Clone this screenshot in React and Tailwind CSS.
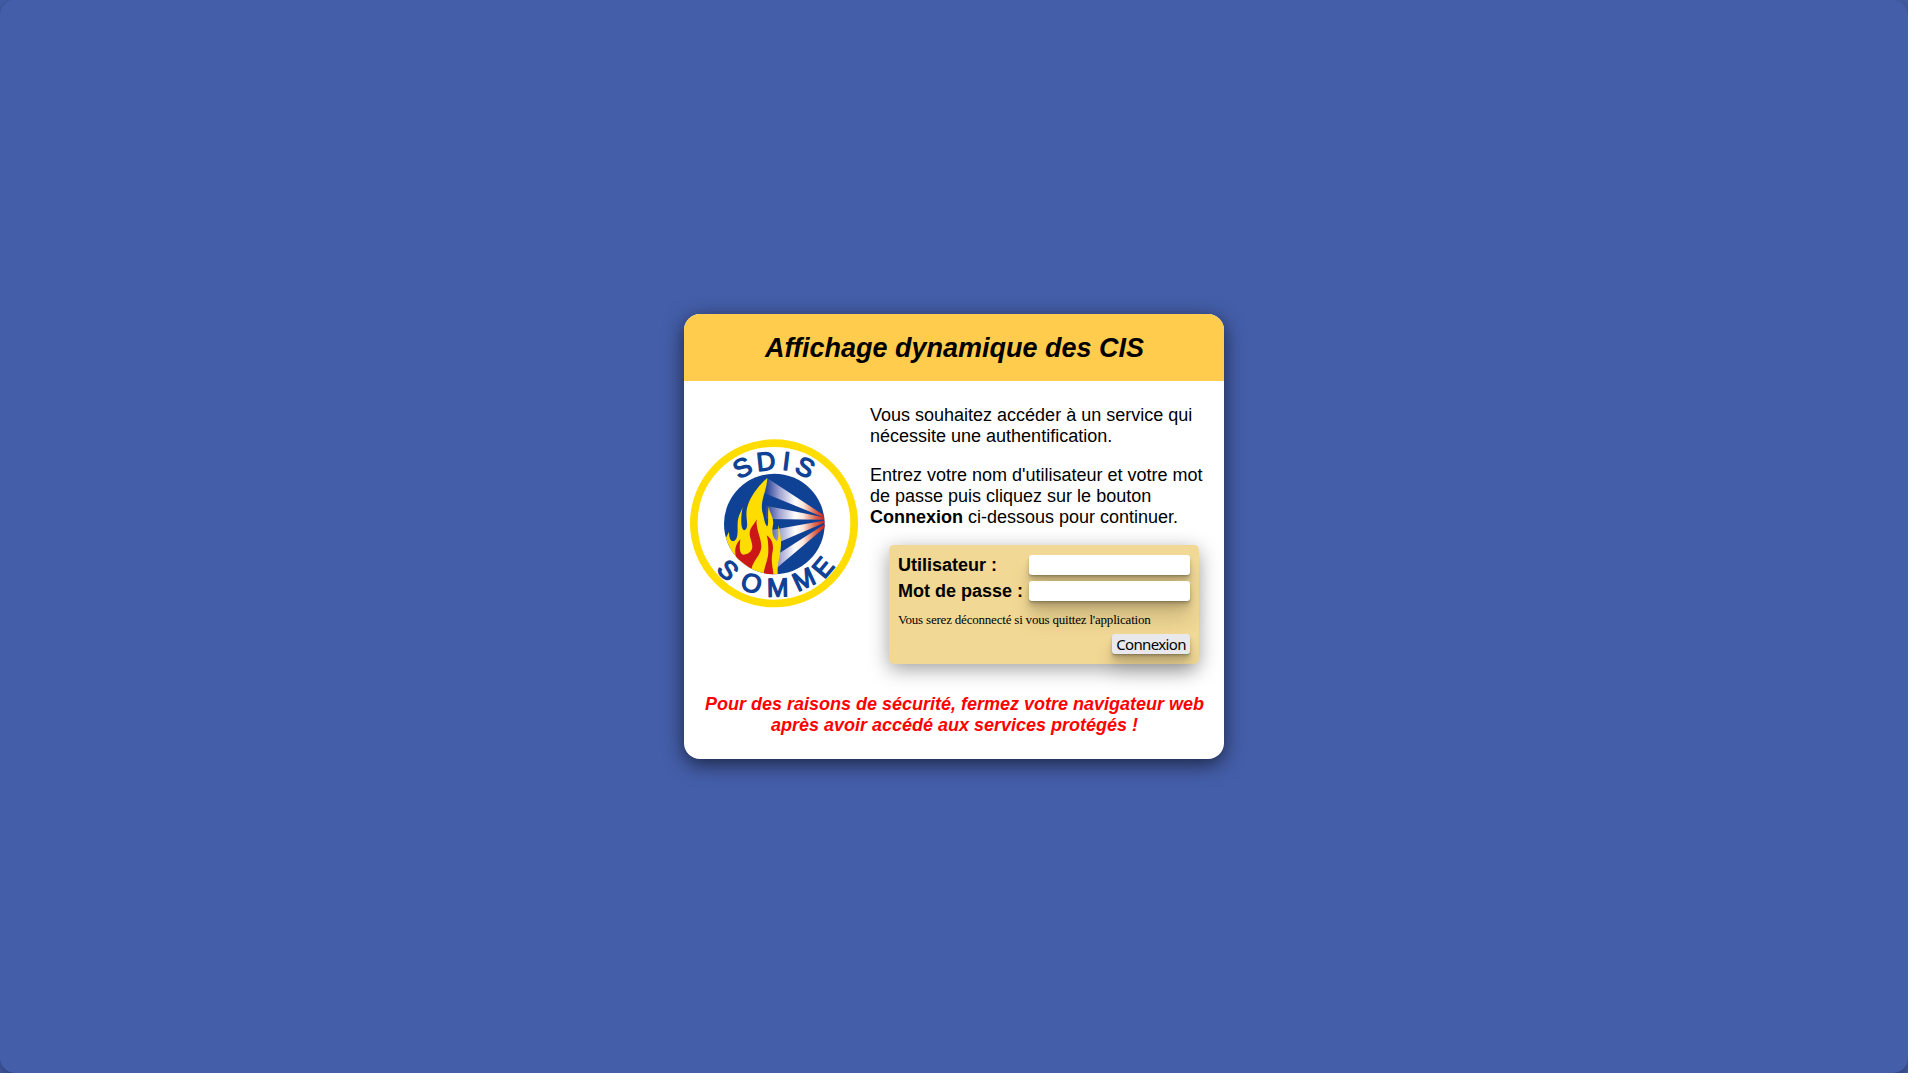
const LETTERS = [
  ["S", 187, 114, -27],
  ["D", 258, 95, -6],
  ["I", 319, 94, 7],
  ["S", 376, 113, 26],
  ["S", 144, 421, 45],
  ["O", 215, 460, 17],
  ["M", 293, 474, -1],
  ["M", 371, 449, -25],
  ["E", 429, 413, -50],
];

function Logo() {
  return (
    <svg className="h-[169px] w-[168px]" viewBox="30 28 504 507" role="img" aria-label="SDIS Somme">
      <defs>
        <linearGradient id="ray" gradientUnits="userSpaceOnUse" x1="262" y1="0" x2="436" y2="0">
          <stop offset="0" stopColor="#2f4a9c" />
          <stop offset="0.2" stopColor="#9c9fd0" />
          <stop offset="0.48" stopColor="#ffffff" />
          <stop offset="0.62" stopColor="#fbe6dc" />
          <stop offset="0.82" stopColor="#dc6a50" />
          <stop offset="1" stopColor="#cc1519" />
        </linearGradient>
        <clipPath id="disc"><circle cx="283" cy="283" r="151" /></clipPath>
      </defs>
      <circle cx="282" cy="281" r="240.500" fill="#fff" stroke="#ffdd00" strokeWidth="23" />
      <circle cx="283" cy="283" r="151" fill="#0f4194" />
      <g clipPath="url(#disc)">
        <g fill="url(#ray)">
          <path d="M262 146 L434 258 L434 264 L252 190Z" />
          <path d="M258 228 L436 264 L436 270 L258 268Z" />
          <path d="M270 302 L436 272 L436 278 L290 341Z" />
          <path d="M286 378 L436 282 L436 292 L284 420Z" />
        </g>
        <path fill="#ffdd00" d="M262 145 C251 154 211 192 201 236 C196 256 203 275 201 290 C200 300 193 306 188 298 C181 285 184 252 188 232 C182 249 173 261 173 282 C172 302 176 326 162 334 C152 337 147 324 147 306 L130 340 L200 430 L294 440 C290 410 298 390 302 358 C305 330 301 306 294 286 C295 305 298 322 291 334 C284 328 274 315 278 292 C284 266 272 258 266 232 C262 256 267 282 262 290 C254 285 252 262 247 246 C240 212 260 185 262 145Z" />
        <path fill="#cc1719" d="M230 269 C227 300 244 324 244 350 C243 378 222 388 214 418 L170 386 C162 368 164 346 181 329 C178 354 178 374 191 375 C204 374 217 366 217 350 C216 334 208 322 209 309 C211 292 223 285 230 269Z" />
        <path fill="#cc1719" d="M260 317 C278 330 282 348 277 370 C272 397 279 414 281 440 L250 440 C253 406 266 390 265 362 C265 344 264 330 260 317Z" />
      </g>
      <g
        fill="#0f4194"
        stroke="#0f4194"
        strokeWidth="4"
        strokeLinejoin="round"
        fontFamily="'Liberation Sans', sans-serif"
        fontSize="78"
        textAnchor="middle"
      >
        {LETTERS.map(([c, x, y, a], i) => (
          <text key={i} transform={`translate(${x} ${y}) rotate(${a})`} y="27">{c}</text>
        ))}
      </g>
    </svg>
  );
}

const RAISED =
  "rounded-[3px] shadow-[0_1px_1px_rgba(0,0,0,0.11),0_2px_2px_rgba(0,0,0,0.11),0_4px_4px_rgba(0,0,0,0.11),0_8px_8px_rgba(0,0,0,0.11),0_18px_20px_rgba(0,0,0,0.14)]";

export default function App() {
  return (
    <div className="h-[1080px] w-[1920px] overflow-hidden bg-white font-['Liberation_Sans',sans-serif] text-lg leading-[21px] text-black">
      <div className="h-[1073px] w-[1908px] overflow-hidden bg-[#445ea9]">
        <main className="flex h-full w-full flex-col items-center rounded-[15px] bg-[#445ea9] pt-[314px] shadow-[0_4px_8px_rgba(0,0,0,0.2),0_6px_20px_rgba(0,0,0,0.19)]">
          <section className="flex h-[445px] w-[540px] flex-col overflow-hidden rounded-[16px] bg-white shadow-[0_5px_20px_rgba(0,0,0,0.62)]">
            <header className="flex h-[67px] items-center justify-center bg-[#ffcc4d]">
              <h1 className="pl-px text-[27px] leading-8 font-bold italic">Affichage dynamique des CIS</h1>
            </header>
            <div className="flex pl-1.5">
              <div className="pt-[58px]"><Logo /></div>
              <div className="ml-3 w-[340px] pt-6">
                <p>Vous souhaitez accéder à un service qui nécessite une authentification.</p>
                <p className="mt-[18px]">
                  Entrez votre nom d'utilisateur et votre mot de passe puis cliquez sur le bouton <b>Connexion</b> ci-dessous pour continuer.
                </p>
                <form className="mt-[17px] ml-[19px] h-[119px] w-[310px] rounded-[5px] bg-[#f1d895] px-[9px] pt-2.5 shadow-[0_5px_20px_rgba(0,0,0,0.38)]">
                  <div className="flex h-5 items-center justify-between font-bold">
                    <label htmlFor="user">Utilisateur :</label>
                    <input id="user" type="text" className={`h-5 w-[161px] bg-white px-1 text-[13px] outline-none ${RAISED}`} />
                  </div>
                  <div className="mt-1.5 flex h-5 items-center justify-between font-bold">
                    <label htmlFor="pass">Mot de passe :</label>
                    <input id="pass" type="password" className={`h-5 w-[161px] bg-white px-1 text-[13px] outline-none ${RAISED}`} />
                  </div>
                  <p className="mt-[11px] font-['Liberation_Serif',serif] text-[13px] leading-4 tracking-[-0.2px]">
                    Vous serez déconnecté si vous quittez l'application
                  </p>
                  <div className="mt-1.5 flex justify-end">
                    <button type="button" className={`h-5 w-[78px] bg-[#e9e9ed] font-['Noto_Sans',sans-serif] text-[15px] leading-5 tracking-[-0.65px] ${RAISED}`}>
                      Connexion
                    </button>
                  </div>
                </form>
              </div>
            </div>
            <p className="relative mt-[30px] pl-px text-center font-bold text-[#ff0000] italic">
              Pour des raisons de sécurité, fermez votre navigateur web<br />après avoir accédé aux services protégés !
            </p>
          </section>
        </main>
      </div>
    </div>
  );
}
